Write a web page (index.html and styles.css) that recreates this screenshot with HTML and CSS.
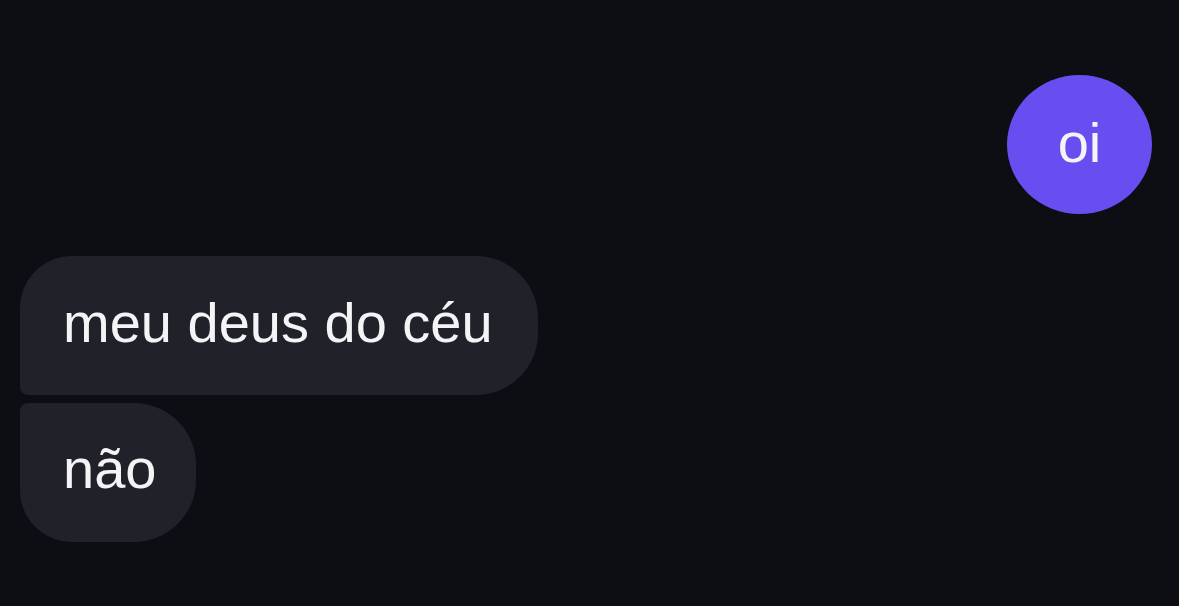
FILE: index.html
```html
<!DOCTYPE html>
<html lang="pt">
<head>
<meta charset="utf-8">
<link rel="stylesheet" href="styles.css">
</head>
<body>
<div class="chat">
  <div class="row row-out">
    <div class="bubble bubble-out">oi</div>
  </div>
  <div class="group-in">
    <div class="bubble bubble-in first">meu deus do céu</div>
    <div class="bubble bubble-in last">não</div>
  </div>
</div>
</body>
</html>
```

FILE: styles.css
```css
html, body {
  margin: 0;
  padding: 0;
  background: #0d0e14;
  height: 100%;
}
body {
  font-family: "Liberation Sans", Arial, sans-serif;
  color: #f4f4f7;
  overflow: hidden;
}
.chat {
  display: flex;
  flex-direction: column;
  padding: 75px 27px 0 20px;
}
.row-out {
  display: flex;
  justify-content: flex-end;
}
.bubble {
  font-size: 56px;
  line-height: 65px;
  box-sizing: border-box;
  height: 139px;
  white-space: nowrap;
}
.bubble-out {
  background: #684ef0;
  width: 145px;
  text-align: center;
  padding-top: 35px;
  border-radius: 50%;
}
.group-in {
  margin-top: 42px;
  display: flex;
  flex-direction: column;
  align-items: flex-start;
  gap: 8px;
}
.bubble-in {
  background: #212229;
  padding: 34px 45px 0 43px;
}
.bubble-in.first {
  border-radius: 52px 62px 62px 8px;
}
.bubble-in.last {
  padding-top: 33px;
  padding-right: 40px;
  border-radius: 8px 62px 62px 52px;
}
```
